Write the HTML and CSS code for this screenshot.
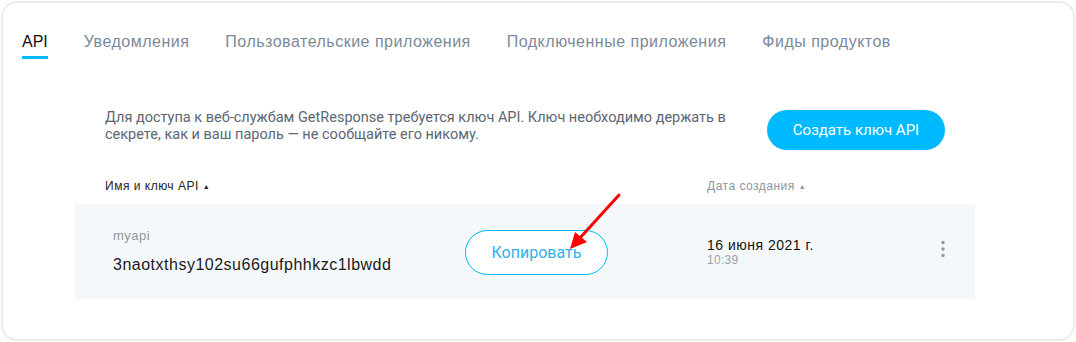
FILE: index.html
```html
<!DOCTYPE html>
<html lang="ru">
<head>
<meta charset="utf-8">
<title>API</title>
<link rel="stylesheet" href="styles.css">
</head>
<body>
<div class="card">
  <nav class="tabs">
    <span class="tab active">API</span>
    <span class="tab">Уведомления</span>
    <span class="tab">Пользовательские приложения</span>
    <span class="tab">Подключенные приложения</span>
    <span class="tab">Фиды продуктов</span>
  </nav>
  <div class="intro">
    <p class="desc">Для доступа к веб-службам GetResponse требуется ключ API. Ключ необходимо держать в секрете, как и ваш пароль — не сообщайте его никому.</p>
    <button class="btn-primary">Создать ключ API</button>
  </div>
  <div class="table">
    <div class="thead">
      <div class="th th-name">Имя и ключ API <span class="caret">▲</span></div>
      <div class="th th-date">Дата создания <span class="caret">▲</span></div>
    </div>
    <div class="row">
      <div class="cell-name">
        <div class="api-name">myapi</div>
        <div class="api-key">3naotxthsy102su66gufphhkzc1lbwdd</div>
      </div>
      <div class="cell-copy"><button class="btn-outline">Копировать</button></div>
      <div class="cell-date">
        <div class="date">16 июня 2021 г.</div>
        <div class="time">10:39</div>
      </div>
      <div class="cell-menu">
        <svg width="6" height="18" viewBox="0 0 6 18"><circle cx="3" cy="2.5" r="1.7" fill="#8e9aa6"/><circle cx="3" cy="9" r="1.7" fill="#8e9aa6"/><circle cx="3" cy="15.5" r="1.7" fill="#8e9aa6"/></svg>
      </div>
    </div>
  </div>
  <svg class="arrow" width="70" height="70" viewBox="0 0 70 70">
    <line x1="62" y1="6" x2="22" y2="50" stroke="#ff0000" stroke-width="3" stroke-linecap="round"/>
    <polygon points="13,60 18,43 30,53" fill="#ff0000"/>
  </svg>
</div>
</body>
</html>
```
FILE: styles.css
```css
* { box-sizing: border-box; }
html, body { margin: 0; padding: 0; background: #fff; }
body { width: 1076px; height: 342px; overflow: hidden; }
.card {
  position: relative;
  margin: 1px;
  height: 340px;
  border: 2px solid #ececec;
  border-radius: 16px;
  background: #fff;
  font-family: "Liberation Sans", Arial, sans-serif;
  letter-spacing: 0.5px;
}
.tabs {
  display: flex;
  gap: 36px;
  padding: 29px 0 0 19px;
  height: 57px;
}
.tab {
  font-size: 16px;
  color: #7b8a9a;
  line-height: 20px;
  height: 27px;
  border-bottom: 3px solid transparent;
}
.tab.active {
  color: #111;
  border-bottom-color: #00baff;
  letter-spacing: 0;
}
.intro {
  display: flex;
  align-items: flex-start;
  padding: 49px 0 0 102px;
}
.desc {
  margin: 0;
  width: 640px;
  font-family: Roboto, "Liberation Sans", sans-serif;
  letter-spacing: 0;
  font-size: 14.5px;
  line-height: 17px;
  color: #5c6672;
}
.btn-primary {
  margin-left: 22px;
  margin-top: 1px;
  width: 178px;
  height: 40px;
  border: none;
  border-radius: 20px;
  background: #00baff;
  color: #fff;
  font-family: Roboto, "Liberation Sans", sans-serif;
  font-size: 15px;
  padding: 0;
}
.table {
  margin: 26px 0 0 71px;
  width: 901px;
}
.thead {
  display: flex;
  height: 28px;
  align-items: flex-start;
  padding-top: 3px;
  font-size: 12px;
  line-height: 14px;
}
.th-name { width: 633px; padding-left: 31px; color: #222; }
.th-date { color: #8a96a3; }
.caret { font-size: 7px; position: relative; top: -1px; }
.row {
  display: flex;
  align-items: center;
  height: 95px;
  background: #f5f8fa;
}
.cell-name { width: 391px; padding-left: 39px; }
.api-name { font-size: 13px; color: #8f979f; margin-top: -2px; }
.api-key { font-size: 16px; color: #1a1a1a; margin-top: 13px; }
.cell-copy { width: 242px; }
.btn-outline {
  width: 143px;
  height: 45px;
  border: 1px solid #00baff;
  border-radius: 23px;
  background: #fff;
  color: #33b0ea;
  font-family: Roboto, "Liberation Sans", sans-serif;
  letter-spacing: 0;
  font-size: 16px;
  padding: 0;
  margin-top: 1px;
}
.cell-date { width: 233px; padding-top: 1px; }
.date { font-size: 14px; color: #111; }
.time { font-size: 12px; letter-spacing: 0.3px; color: #9aa2a9; margin-top: 0; }
.cell-menu { display: flex; align-items: center; margin-top: -5px; }
.arrow { position: absolute; left: 554px; top: 186px; }
```
